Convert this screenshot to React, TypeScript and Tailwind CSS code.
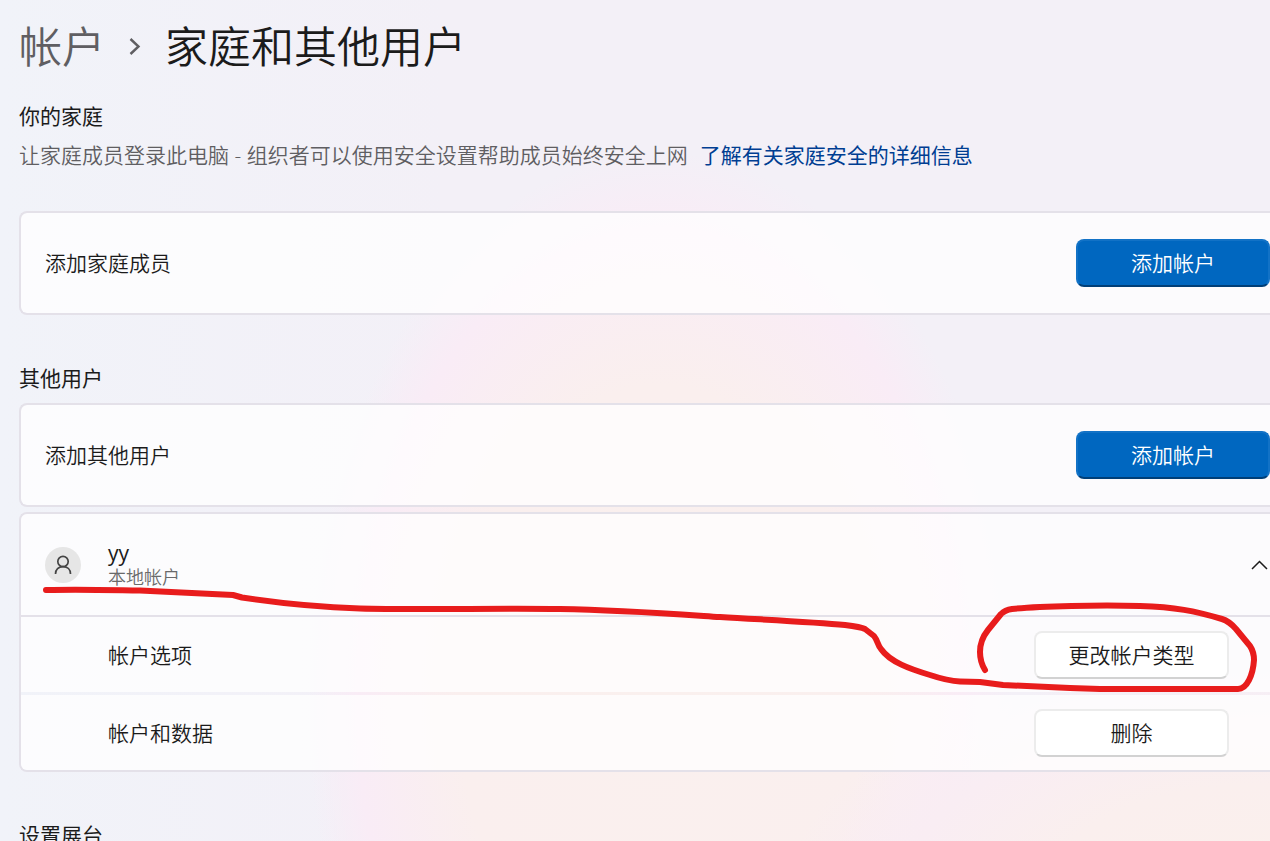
import { useState } from 'react';

interface SettingCardProps {
  label: string;
  action: string;
}

function SectionTitle({ children }: { children: React.ReactNode }) {
  return <h2 className="text-[21px] leading-[30px] font-normal text-[#1b1b1b]">{children}</h2>;
}

function SettingCard({ label, action }: SettingCardProps) {
  return (
    <div className="flex items-center justify-between h-[104px] pl-6 rounded-l-lg border-2 border-r-0 border-[#e4e1e9] bg-white/75 bg-clip-padding">
      <span>{label}</span>
      <button className="w-[194px] h-12 rounded-lg border-2 border-[#1272c6] border-b-[#003f78] bg-[#0067c0] text-white">
        {action}
      </button>
    </div>
  );
}

function OptionRow({ label, action }: SettingCardProps) {
  return (
    <div className="flex items-center justify-between h-[75px] pl-[87px] pr-[41px] bg-white/75">
      <span>{label}</span>
      <button className="w-[195px] h-12 rounded-lg border-2 border-[#ececec] border-b-[#d2d2d2] bg-white">
        {action}
      </button>
    </div>
  );
}

// 手绘红色标注
function Annotation() {
  return (
    <svg
      className="absolute left-0 top-0 pointer-events-none"
      width="1270"
      height="841"
      viewBox="0 0 1270 841"
      fill="none"
      stroke="#e81c1c"
      strokeWidth="6"
      strokeLinecap="round"
      strokeLinejoin="round"
      aria-hidden="true"
    >
      <path d="M46 590 C80 589 110 590 140 590.500 L233 595 L242 597.500 C278 603 315 607 360 608.500 C420 610 500 608 560 609 C620 610 660 613 720 617 C770 620 815 622 845 625 Q861 627 865 629 L874 636 C878 641 877 644 881 649 C890 662 910 669 930 675 Q948 681 960 681.500 L980 682 L1003 685 L1070 688 L1100 689 L1238 689 C1247 689 1253 675 1254 660 Q1254 652 1250 646 L1236 629 Q1229 621 1222 619 C1195 611 1175 607 1140 606 C1100 605 1040 606 1012 609 Q1005 610 1001 614 L988 630 Q980 640 980 652 Q980 662 985 670" />
    </svg>
  );
}

export default function App() {
  const [expanded, setExpanded] = useState(true);

  return (
    <div
      lang="zh-CN"
      className="relative h-screen overflow-hidden pl-[19px] text-[21px] leading-[30px] text-[#1b1b1b] font-['Open_Sans','Noto_Sans_CJK_SC',sans-serif] font-[350] bg-[#f2f1f8] bg-[radial-gradient(ellipse_480px_220px_at_100%_105%,#faf0ec_0%,#faefee_45%,#f9edf3_75%,transparent_100%),radial-gradient(ellipse_310px_480px_at_52%_83%,#faf0ee_0%,#faefee_65%,#f9ecf6_98%,transparent_114%),linear-gradient(to_right,#f1f3f9,#f3f0f7_35%,#f3f0f7)]"
    >
      <h1 className="flex items-center pt-4 text-[43px] leading-[62px]">
        <a href="#accounts" className="text-[#5f5e62]">帐户</a>
        <svg className="mx-6" width="12" height="18" viewBox="0 0 12 18" fill="none" stroke="#5f5e62" strokeWidth="2.400">
          <path d="M1.500 1 L9.500 8.500 L1.500 16" />
        </svg>
        <span>家庭和其他用户</span>
      </h1>

      <section className="mt-[23px]">
        <SectionTitle>你的家庭</SectionTitle>
        <p className="mt-[9px] text-[#5f5e62]">
          让家庭成员登录此电脑 - 组织者可以使用安全设置帮助成员始终安全上网
          <a href="#family-safety" className="ml-3 font-normal text-[#003e92]">了解有关家庭安全的详细信息</a>
        </p>
        <div className="mt-[41px]">
          <SettingCard label="添加家庭成员" action="添加帐户" />
        </div>
      </section>

      <section className="mt-12">
        <SectionTitle>其他用户</SectionTitle>
        <div className="mt-[10px] flex flex-col gap-[5px]">
          <SettingCard label="添加其他用户" action="添加帐户" />
          <div className="rounded-l-lg border-2 border-r-0 border-[#e4e1e9] overflow-hidden">
            <button
              className="flex items-center w-full h-[103px] pl-6 pr-[2px] text-left bg-white/75 bg-clip-padding border-b-2 border-[#e4e1e9]"
              onClick={() => setExpanded(!expanded)}
              aria-expanded={expanded}
            >
              <span className="flex items-center justify-center w-9 h-9 rounded-full bg-[#e6e6e6]">
                <svg width="18" height="20" viewBox="0 0 18 20" fill="none" stroke="#454545" strokeWidth="1.700">
                  <circle cx="9" cy="6.500" r="5.200" />
                  <path d="M1.500 19 C1.500 14.500 4.500 11.700 9 11.700 C13.500 11.700 16.500 14.500 16.500 19" />
                </svg>
              </span>
              <span className="flex flex-col ml-[27px]">
                <span className="leading-6 font-normal">yy</span>
                <span className="text-[18px] leading-6 text-[#6a6a6a]">本地帐户</span>
              </span>
              <svg className="ml-auto" width="17" height="10" viewBox="0 0 17 10" fill="none" stroke="#1b1b1b" strokeWidth="1.500">
                <path d="M1 9 L8.500 1.500 L16 9" />
              </svg>
            </button>
            {expanded && (
              <div className="flex flex-col gap-[3px]">
                <OptionRow label="帐户选项" action="更改帐户类型" />
                <OptionRow label="帐户和数据" action="删除" />
              </div>
            )}
          </div>
        </div>
      </section>

      <section className="mt-12">
        <SectionTitle>设置展台</SectionTitle>
      </section>

      <Annotation />
    </div>
  );
}
